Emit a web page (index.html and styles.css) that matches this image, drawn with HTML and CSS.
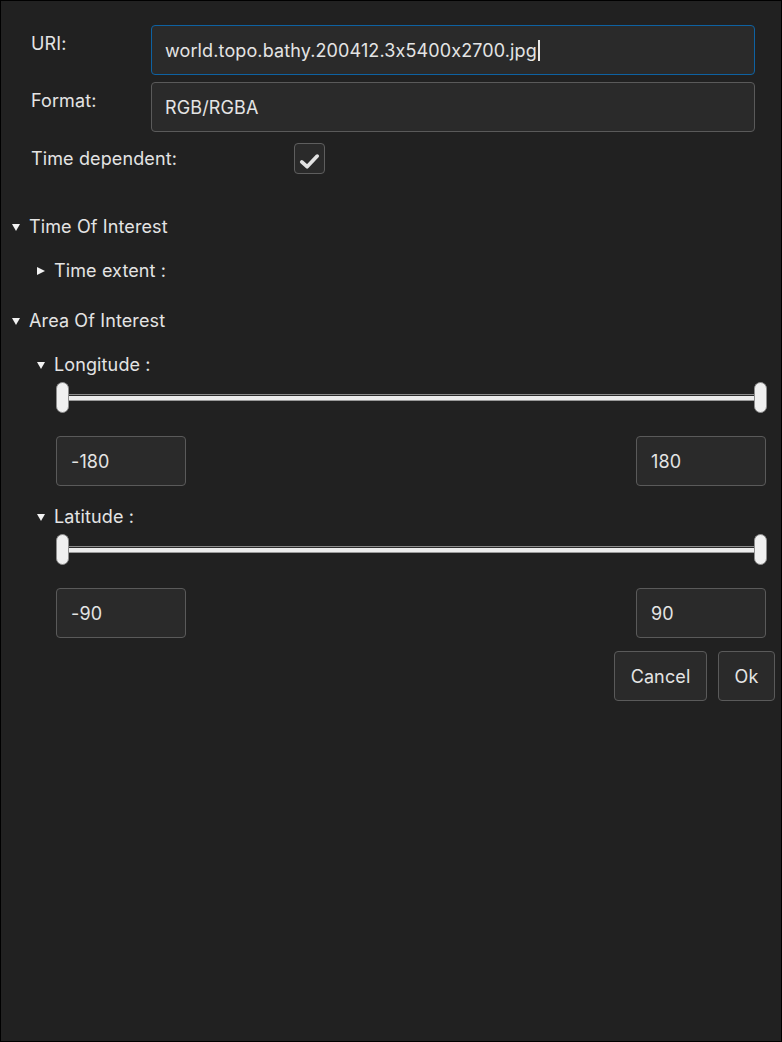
FILE: index.html
```html
<!DOCTYPE html>
<html lang="en">
<head>
    <meta charset="UTF-8">
    <meta name="viewport" content="width=device-width, initial-scale=1.0">
    <title>Image Layer</title>
    <link rel="stylesheet" href="styles.css">
</head>
<body>
    <div class="window">
        <div class="form">
            <div class="row row-uri">
                <span class="label">URI:</span>
                <div class="field focused">world.topo.bathy.200412.3x5400x2700.jpg<span class="caret"></span></div>
            </div>
            <div class="row row-format">
                <span class="label">Format:</span>
                <div class="field">RGB/RGBA</div>
            </div>
            <div class="row row-check">
                <span class="label label-wide">Time dependent:</span>
                <div class="checkbox">
                    <svg width="30" height="30" viewBox="0 0 30 30">
                        <polyline points="7,18 12.5,23 23,12" fill="none" stroke="#e2e2e2" stroke-width="3.8" stroke-linecap="round" stroke-linejoin="round"/>
                    </svg>
                </div>
            </div>
        </div>

        <div class="tree-item level-0 toi">
            <span class="arrow down"></span>Time Of Interest
        </div>
        <div class="tree-item level-1 extent">
            <span class="arrow right"></span>Time extent :
        </div>

        <div class="tree-item level-0 aoi">
            <span class="arrow down"></span>Area Of Interest
        </div>

        <div class="tree-item level-1 lon">
            <span class="arrow down"></span>Longitude :
        </div>
        <div class="range">
            <div class="range-track"></div>
            <span class="thumb thumb-min"></span>
            <span class="thumb thumb-max"></span>
        </div>
        <div class="bounds">
            <div class="num">-180</div>
            <div class="num">180</div>
        </div>

        <div class="tree-item level-1 lat">
            <span class="arrow down"></span>Latitude :
        </div>
        <div class="range">
            <div class="range-track"></div>
            <span class="thumb thumb-min"></span>
            <span class="thumb thumb-max"></span>
        </div>
        <div class="bounds">
            <div class="num">-90</div>
            <div class="num">90</div>
        </div>

        <div class="actions">
            <button class="btn btn-cancel">Cancel</button>
            <button class="btn btn-ok">Ok</button>
        </div>
    </div>
</body>
</html>
```

FILE: styles.css
```css
* {
    box-sizing: border-box;
}
body {
    margin: 0;
    background-color: #000;
    font-family: Inter, "Noto Sans", sans-serif;
    font-size: 18px;
    font-feature-settings: "calt" 0;
    letter-spacing: 0.12px;
    color: #e4e4e4;
}
.window {
    width: 782px;
    height: 1042px;
    border: 1px solid #000;
    background-color: #212121;
    display: flex;
    flex-direction: column;
}

/* top form */
.form {
    padding: 24px 26px 0 30px;
    display: flex;
    flex-direction: column;
}
.row {
    display: flex;
    align-items: flex-start;
}
.row-format {
    margin-top: 7px;
}
.row-check {
    margin-top: 11px;
    align-items: center;
}
.label {
    width: 120px;
    flex-shrink: 0;
    padding-top: 7px;
    line-height: 24px;
}
.label-wide {
    width: 263px;
    padding-top: 0;
}
.field {
    flex: 1;
    height: 50px;
    padding: 0 13px;
    display: flex;
    align-items: center;
    background-color: #2a2a2a;
    border: 1px solid #5a5a5a;
    border-radius: 4px;
}
.field.focused {
    border-color: #0e62a2;
}
.caret {
    display: inline-block;
    width: 2px;
    height: 21px;
    margin-left: 1px;
    background-color: #e8e8e8;
}
.checkbox {
    width: 31px;
    height: 31px;
    background-color: #2a2a2a;
    border: 1px solid #5e5e5e;
    border-radius: 4px;
    display: flex;
    align-items: center;
    justify-content: center;
}

/* tree rows */
.tree-item {
    display: flex;
    align-items: center;
    height: 24px;
    line-height: 24px;
}
.level-0 {
    padding-left: 11px;
}
.level-1 {
    padding-left: 36px;
}
.arrow {
    width: 0;
    height: 0;
    margin-right: 9px;
}
.arrow.down {
    border-left: 4px solid transparent;
    border-right: 4px solid transparent;
    border-top: 7px solid #f2f2f2;
}
.arrow.right {
    border-top: 4px solid transparent;
    border-bottom: 4px solid transparent;
    border-left: 8px solid #f2f2f2;
}
.toi {
    margin-top: 41px;
}
.extent {
    margin-top: 20px;
}
.aoi {
    margin-top: 26px;
}
.lon {
    margin-top: 20px;
}
.lat {
    margin-top: 19px;
}

/* range slider */
.range {
    position: relative;
    margin: 5px 0 0 55px;
    width: 710px;
    height: 31px;
    display: flex;
    align-items: center;
    padding: 0 6px;
}
.range-track {
    width: 100%;
    height: 7px;
    background: linear-gradient(#8c8c8c 0 1px, #2b2b2b 1px 2px, #ececec 2px 6px, #9a9a9a 6px 7px);
}
.thumb {
    position: absolute;
    top: 0;
    width: 13px;
    height: 31px;
    background-color: #f0f0f0;
    border: 1px solid #8e8e8e;
    border-radius: 7px;
}
.thumb-min {
    left: 0;
}
.thumb-max {
    right: -1px;
}

.bounds {
    margin: 23px 0 0 55px;
    width: 710px;
    display: flex;
    justify-content: space-between;
}
.num {
    width: 130px;
    height: 50px;
    padding-left: 14px;
    display: flex;
    align-items: center;
    background-color: #2a2a2a;
    border: 1px solid #5a5a5a;
    border-radius: 4px;
}

/* dialog buttons */
.actions {
    margin-top: 13px;
    padding-right: 6px;
    display: flex;
    justify-content: flex-end;
    gap: 11px;
}
.btn {
    height: 50px;
    font-family: inherit;
    font-size: 18px;
    letter-spacing: inherit;
    color: #e4e4e4;
    background-color: #2a2a2a;
    border: 1px solid #5a5a5a;
    border-radius: 4px;
    padding: 0;
}
.btn-cancel {
    width: 93px;
}
.btn-ok {
    width: 57px;
}
```
